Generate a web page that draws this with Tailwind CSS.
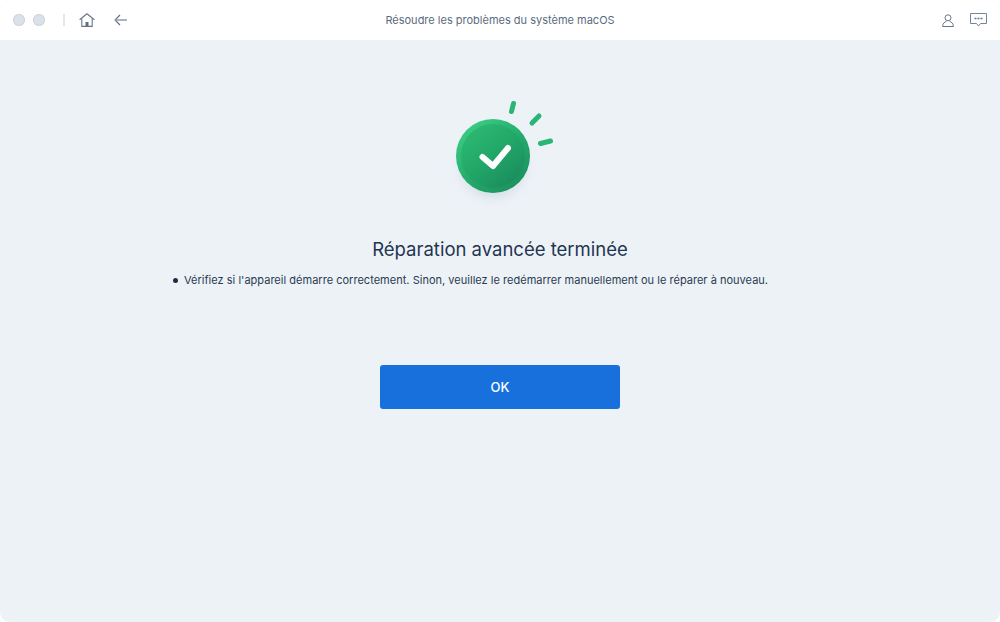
<!DOCTYPE html>
<html lang="fr">

<head>
    <meta charset="UTF-8">
    <meta name="viewport" content="width=device-width, initial-scale=1.0">
    <script src="https://cdn.jsdelivr.net/npm/@tailwindcss/browser@4"></script>
    <title>Réparation avancée terminée</title>
</head>

<body class="bg-white">
    <div class="h-[622px] w-[1000px] flex flex-col overflow-hidden rounded-[10px] bg-[#edf2f7] font-['Inter',sans-serif]">
        <!-- title bar -->
        <header class="relative h-10 shrink-0 flex items-center bg-white pl-[13px] pr-[13px]">
            <span class="size-3 rounded-full bg-[#dbe1e9] ring-1 ring-inset ring-[#cdd5de]"></span>
            <span class="ml-2 size-3 rounded-full bg-[#dbe1e9] ring-1 ring-inset ring-[#cdd5de]"></span>
            <span class="ml-[18px] h-3 w-0.5 bg-[#e3e8ee]"></span>
            <svg class="ml-[14px]" width="16" height="14" viewBox="0 0 16 14" fill="none">
                <path d="M.6 6.800 8 .8 15.400 6.800" stroke="#66758a" stroke-width="1.100" stroke-linejoin="round" />
                <path d="M2.800 5.500V13.400H13.200V5.500" stroke="#66758a" stroke-width="1.100" />
                <rect x="6.500" y="9" width="3" height="4.400" fill="#5f6f84" />
            </svg>
            <svg class="ml-[19px]" width="13" height="12" viewBox="0 0 13 12" fill="none">
                <path d="M6 1 1 6l5 5" stroke="#5f6f84" stroke-width="1.100" />
                <path d="M1 6H13" stroke="#8f9cad" stroke-width="1.300" />
            </svg>
            <span class="absolute inset-x-0 text-center text-[11px] text-[#5a6b80]">Résoudre les problèmes du système macOS</span>
            <svg class="ml-auto" width="12" height="13" viewBox="0 0 12 13" fill="none">
                <circle cx="6" cy="3.800" r="3" stroke="#66758a" stroke-width="1" />
                <path d="M.6 12.500C.6 9.500 2.500 8 4.400 7.400M11.400 12.500C11.400 9.500 9.500 8 7.600 7.400M.6 12.500H11.400" stroke="#66758a" stroke-width="1" />
            </svg>
            <svg class="ml-4" width="17" height="14" viewBox="0 0 17 14" fill="none">
                <path d="M.5.5H16.500V10.500H10.500L8.500 13 6.500 10.500H.5Z" stroke="#76859a" stroke-width="1" />
                <path d="M4.500 5.500H6.500M7.500 5.500H9.500M10.500 5.500H12.500" stroke="#66758a" stroke-width="1.600" />
            </svg>
        </header>

        <main class="flex flex-col items-center">
            <svg class="mt-[57px]" width="110" height="110" viewBox="0 0 110 110" fill="none">
                <defs>
                    <linearGradient id="rim" x1="0.15" y1="0.1" x2="0.8" y2="0.9">
                        <stop offset="0" stop-color="#3bcb84" />
                        <stop offset="0.5" stop-color="#25ad6c" />
                        <stop offset="1" stop-color="#1c9460" />
                    </linearGradient>
                    <linearGradient id="disc" x1="0.15" y1="0.1" x2="0.8" y2="0.9">
                        <stop offset="0" stop-color="#2bb872" />
                        <stop offset="0.5" stop-color="#22a768" />
                        <stop offset="1" stop-color="#1b8f5e" />
                    </linearGradient>
                    <filter id="soft" x="-40%" y="-40%" width="180%" height="180%">
                        <feGaussianBlur stdDeviation="6" />
                    </filter>
                </defs>
                <circle cx="48" cy="68" r="33" fill="#c3cfda" fill-opacity="0.55" filter="url(#soft)" />
                <circle cx="48" cy="59" r="37" fill="url(#rim)" />
                <circle cx="48" cy="59" r="32" fill="url(#disc)" />
                <path d="M37.500 60 48 69 63 51" stroke="#fff" stroke-width="6" stroke-linecap="round" stroke-linejoin="round" />
                <path d="M66.500 14.500 68.500 6.500M87 26 94 19M95.500 46.500 105.500 44" stroke="#29b573" stroke-width="5" stroke-linecap="round" />
            </svg>

            <h1 class="mt-7 text-[18.5px] leading-7 text-[#1f3550]">Réparation avancée terminée</h1>

            <ul class="mt-2 w-[654px] text-[11px] leading-[18px] tracking-[0.02px] text-[#2a3b52]">
                <li class="flex items-center gap-[6px]">
                    <span class="size-[5px] rounded-full bg-[#1f2d40]"></span>
                    Vérifiez si l'appareil démarre correctement. Sinon, veuillez le redémarrer manuellement ou le réparer à nouveau.
                </li>
            </ul>

            <button type="button" class="mt-[76px] h-11 w-60 rounded-[3px] bg-[#1870dc] pt-0.5 text-[13px] font-medium text-white">OK</button>
        </main>
    </div>
</body>

</html>
